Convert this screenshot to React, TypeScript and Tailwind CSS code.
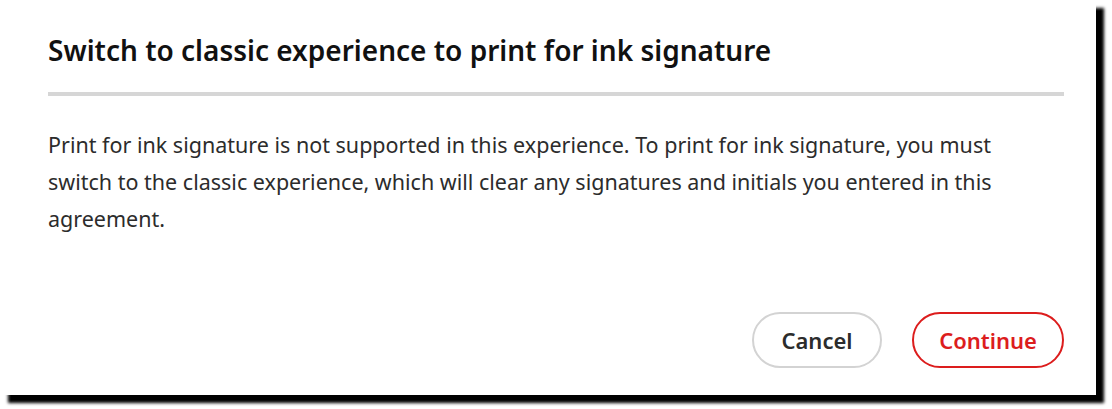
export default function App() {
  return (
    <div className="h-[409px] w-[1112px] bg-white">
      <div
        className="flex h-[395px] w-[1096px] flex-col bg-white pl-12 pr-8 pt-[30px] pb-[27px] shadow-[8px_8px_3px_#000]"
        style={{ fontFamily: "'Noto Sans', sans-serif" }}
      >
        <h2 className="text-[28px] font-semibold leading-[40px] text-[#111]">
          Switch to classic experience to print for ink signature
        </h2>
        <div className="mt-[22px] h-[4px] w-full bg-[#d6d6d6]" />
        <p className="mt-[30px] text-[21.5px] leading-[37px] text-[#2c2c2c]">
          Print for ink signature is not supported in this experience. To print
          for ink signature, you must
          <br />
          switch to the classic experience, which will clear any signatures and
          initials you entered in this
          <br />
          agreement.
        </p>
        <div className="mt-auto flex justify-end gap-[30px]">
          <button className="h-[56px] w-[130px] rounded-full border-2 border-[#d3d3d3] text-[22px] font-semibold text-[#2c2c2c]">
            Cancel
          </button>
          <button className="h-[56px] w-[152px] rounded-full border-2 border-[#dc1d1d] text-[22px] font-semibold text-[#dc1d1d]">
            Continue
          </button>
        </div>
      </div>
    </div>
  );
}
